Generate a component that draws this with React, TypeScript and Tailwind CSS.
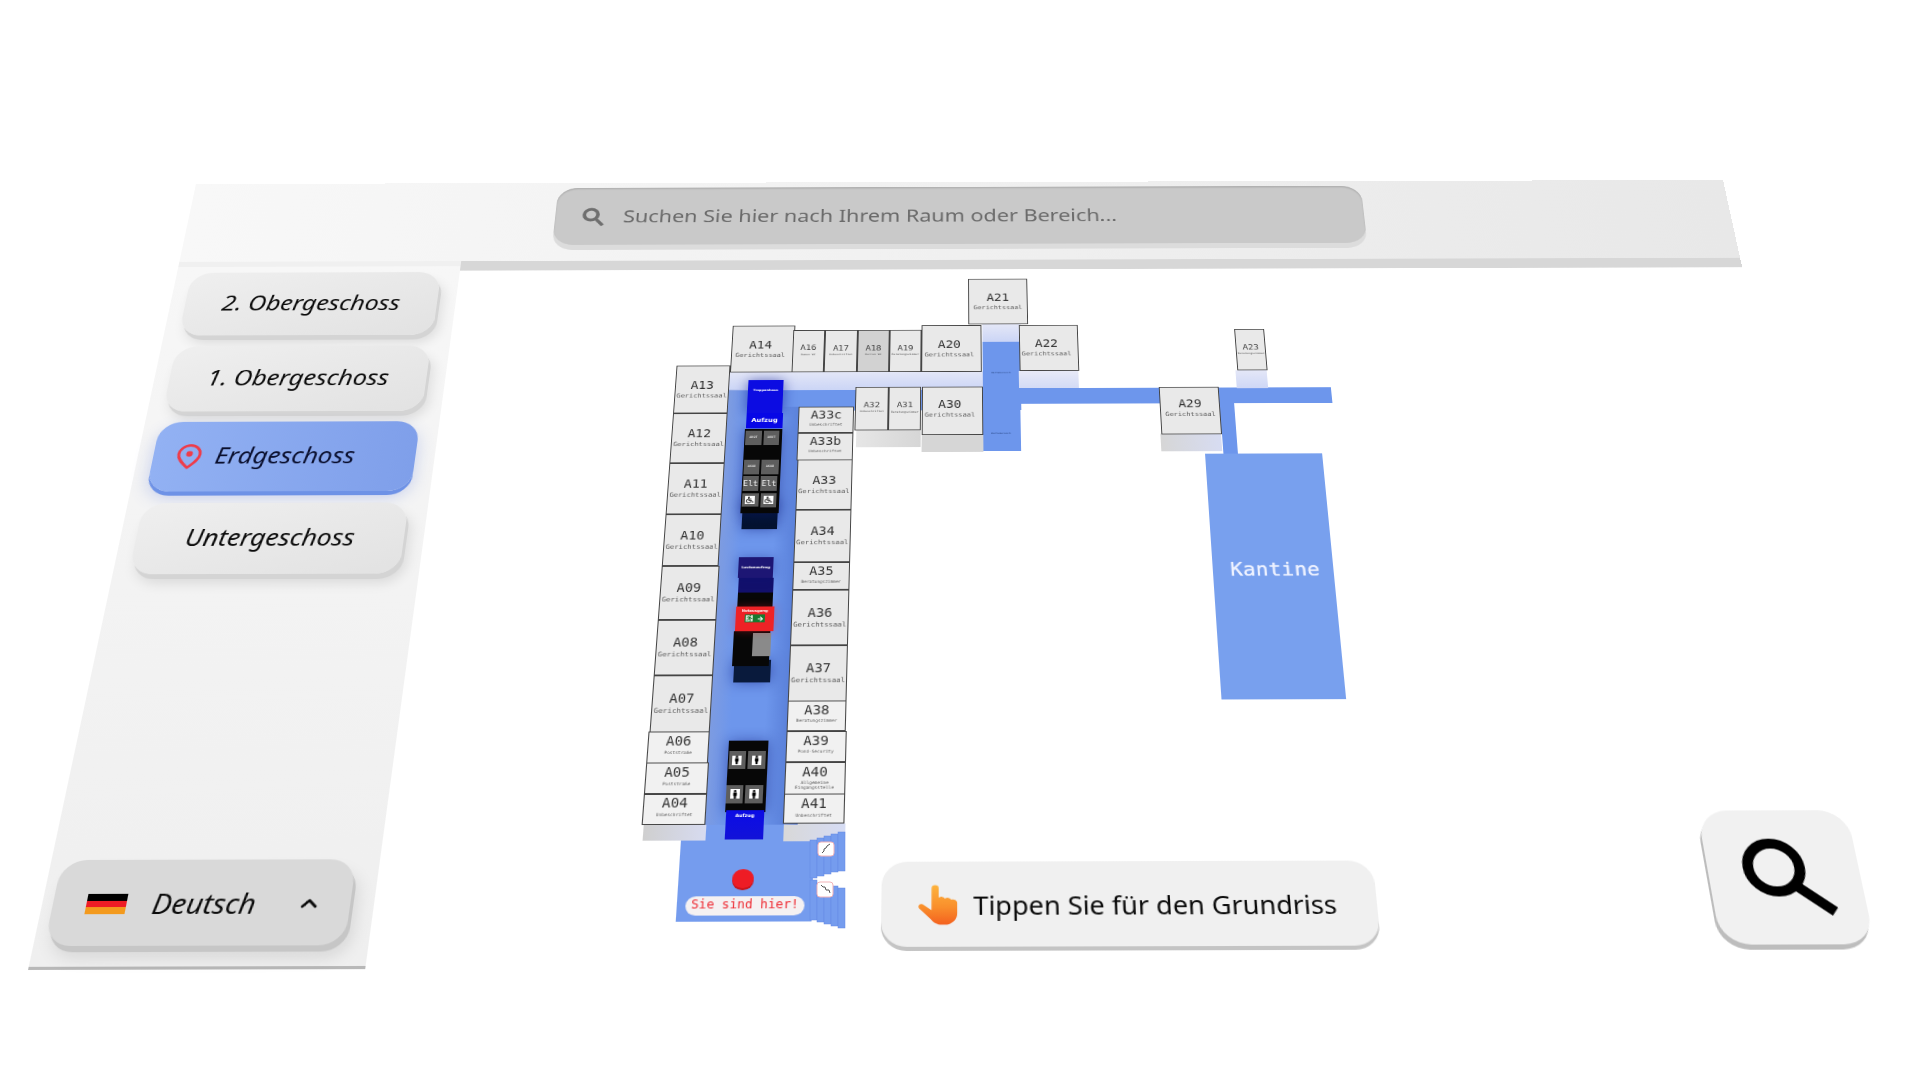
import type { ReactNode } from "react";
import { ChevronUp } from "lucide-react";
import { FaMale, FaRunning, FaWheelchair, FaArrowRight } from "react-icons/fa";

// the whole scene is one tilted plane; corners of the plane as they land on screen
const W = 1700;
const H = 920;
const [x0, y0, x1, y1, x2, y2, x3, y3] = [196, 184, 1723, 180, 1895, 965, 28, 970];

const den = (x1 - x2) * (y3 - y2) - (x3 - x2) * (y1 - y2);
const sx = x0 - x1 + x2 - x3;
const sy = y0 - y1 + y2 - y3;
const g = (sx * (y3 - y2) - (x3 - x2) * sy) / den;
const h = ((x1 - x2) * sy - sx * (y1 - y2)) / den;
const a = x1 - x0 + g * x1;
const b = x3 - x0 + h * x3;
const d = y1 - y0 + g * y1;
const e = y3 - y0 + h * y3;

const planeMatrix = `matrix3d(${a / W},${d / W},0,${g / W},${b / H},${e / H},0,${h / H},0,0,1,0,${x0},${y0},0,1)`;

// screen point -> plane point
function toPlane(x: number, y: number) {
  const m11 = a - g * x;
  const m12 = b - h * x;
  const m21 = d - g * y;
  const m22 = e - h * y;
  const det = m11 * m22 - m12 * m21;
  const u = ((x - x0) * m22 - m12 * (y - y0)) / det;
  const v = (m11 * (y - y0) - (x - x0) * m21) / det;
  return { x: u * W, y: v * H };
}

type BoxProps = {
  r: [number, number, number, number];
  className?: string;
  children?: ReactNode;
};

// r = top-left x, top y, bottom-right x, bottom y, measured on screen
function Box({ r, className, children }: BoxProps) {
  const p = toPlane(r[0], r[1]);
  const q = toPlane(r[2], r[3]);
  return (
    <div
      className={`absolute ${className ?? ""}`}
      style={{ left: p.x, top: p.y, width: q.x - p.x, height: q.y - p.y }}
    >
      {children}
    </div>
  );
}

type Room = {
  name: string;
  sub: string;
  r: [number, number, number, number];
  size: "l" | "m" | "s";
  bg?: string;
  nudge?: string;
};

const rooms: Room[] = [
  { name: "A21", sub: "Gerichtssaal", r: [968, 279, 1028, 324], size: "l" },
  { name: "A14", sub: "Gerichtssaal", r: [733, 326, 793, 372], size: "l", nudge: "pr-[5px]" },
  { name: "A16", sub: "Damen WC", r: [793, 330, 824, 372], size: "s", nudge: "pb-[2px]" },
  { name: "A17", sub: "Unbeschriftet", r: [825, 330, 857, 372], size: "s", nudge: "pb-[2px]" },
  { name: "A18", sub: "Herren WC", r: [858, 330, 889, 372], size: "s", bg: "bg-[#d2d2d2]", nudge: "pb-[2px]" },
  { name: "A19", sub: "Beratungszimmer", r: [890, 330, 921, 372], size: "s", nudge: "pb-[2px]" },
  { name: "A20", sub: "Gerichtssaal", r: [922, 325, 982, 372], size: "l", nudge: "pr-[5px]" },
  { name: "A22", sub: "Gerichtssaal", r: [1019, 325, 1079, 371], size: "l", nudge: "pr-[5px]" },
  { name: "A23", sub: "Beratungszimmer", r: [1234, 329, 1268, 370], size: "s" },
  { name: "A29", sub: "Gerichtssaal", r: [1159, 387, 1222, 434], size: "l", nudge: "pb-[6px]" },
  { name: "A30", sub: "Gerichtssaal", r: [922, 387, 983, 435], size: "l", nudge: "pr-[5px] pb-[6px]" },
  { name: "A31", sub: "Beratungszimmer", r: [889, 387, 921, 430], size: "s", nudge: "pb-[3px]" },
  { name: "A32", sub: "Unbeschriftet", r: [856, 387, 888, 430], size: "s", nudge: "pb-[3px]" },
  { name: "A33c", sub: "Unbeschriftet", r: [799, 407, 853.4, 433], size: "m", nudge: "pb-[5px]" },
  { name: "A33b", sub: "Unbeschriftet", r: [798, 433, 852.8, 460], size: "m", nudge: "pb-[5px]" },
  { name: "A33", sub: "Gerichtssaal", r: [797, 460, 851.6, 510], size: "l" },
  { name: "A34", sub: "Gerichtssaal", r: [795, 510, 850.3, 562], size: "l" },
  { name: "A35", sub: "Beratungszimmer", r: [793, 562, 849.6, 590], size: "m", nudge: "pb-[3px]" },
  { name: "A36", sub: "Gerichtssaal", r: [792, 590, 848.3, 645], size: "l" },
  { name: "A37", sub: "Gerichtssaal", r: [790, 645, 847, 701], size: "l" },
  { name: "A38", sub: "Beratungszimmer", r: [787.5, 701, 846.2, 731], size: "m", bg: "bg-[#f1f1f1]", nudge: "pb-[5px]" },
  { name: "A39", sub: "Pond-Security", r: [786.4, 731, 845.5, 762], size: "m", bg: "bg-[#f1f1f1]", nudge: "pb-[5px]" },
  { name: "A40", sub: "Allgemeine Eingangsstelle", r: [785, 762, 844.7, 794], size: "m", bg: "bg-[#f1f1f1]" },
  { name: "A41", sub: "Unbeschriftet", r: [784, 794, 844, 824], size: "m", bg: "bg-[#f1f1f1]", nudge: "pb-[3px]" },
  { name: "A13", sub: "Gerichtssaal", r: [677, 366, 727.5, 413], size: "l" },
  { name: "A12", sub: "Gerichtssaal", r: [673.4, 413, 725, 463], size: "l" },
  { name: "A11", sub: "Gerichtssaal", r: [669.6, 463, 722, 514], size: "l" },
  { name: "A10", sub: "Gerichtssaal", r: [665.7, 514, 719, 566], size: "l" },
  { name: "A09", sub: "Gerichtssaal", r: [661.7, 566, 716, 620], size: "l" },
  { name: "A08", sub: "Gerichtssaal", r: [657.6, 620, 713, 675], size: "l" },
  { name: "A07", sub: "Gerichtssaal", r: [653.4, 675, 710, 732], size: "l" },
  { name: "A06", sub: "Poststraße", r: [649, 732, 708, 763], size: "m", bg: "bg-[#f1f1f1]", nudge: "pb-[5px]" },
  { name: "A05", sub: "Poststraße", r: [646.7, 763, 707, 794], size: "m", bg: "bg-[#f1f1f1]", nudge: "pb-[5px]" },
  { name: "A04", sub: "Unbeschriftet", r: [644.3, 794, 705, 825], size: "m", bg: "bg-[#f1f1f1]", nudge: "pb-[5px]" },
];

// soft faces under the raised rooms
const walls: BoxProps[] = [
  { r: [730, 372, 983, 390], className: "bg-linear-to-b from-[#e4e7f7] to-[#cbd5f6]" },
  { r: [982, 324, 1021, 342], className: "bg-linear-to-b from-[#e4e7f7] to-[#cbd5f6]" },
  { r: [1019, 371, 1079, 388], className: "bg-linear-to-b from-[#e8eaf7] to-[#d3dbf6]" },
  { r: [1235, 370, 1268, 388], className: "bg-linear-to-b from-[#e4e7f7] to-[#ced7f6]" },
  { r: [1160, 434, 1222, 451], className: "bg-linear-to-r from-[#d6d6d6] to-[#d7dcf2]" },
  { r: [856, 430, 921, 447], className: "bg-linear-to-r from-[#e6e6e6] to-[#d6d6d6]" },
  { r: [922, 435, 983, 452], className: "bg-[#d6d6d6]" },
  { r: [644, 825, 705, 841], className: "bg-linear-to-r from-[#cfcfcf] to-[#d7dbf0]" },
  { r: [784, 824, 845, 841], className: "bg-linear-to-r from-[#d8d8d8] to-[#d6dcf4]" },
  { r: [714, 390, 726, 825], className: "bg-linear-to-r from-[#8aa0d8] to-transparent" },
  { r: [780, 407, 798, 825], className: "bg-linear-to-r from-transparent to-[#4f74cf]" },
];

const floors: BoxProps[] = [
  { r: [708, 372, 800, 840], className: "bg-[#6d96ec]" },
  { r: [730, 372, 1021, 410], className: "bg-[#6d96ec]" },
  { r: [982, 325, 1021, 451], className: "bg-[#6d96ec]" },
  { r: [1019, 388, 1332, 403], className: "bg-[#6d96ec]" },
  { r: [1220, 400, 1238, 456], className: "bg-[#6d96ec]" },
  { r: [682, 825, 812, 921], className: "bg-[#759cee]" },
];

type Tile = { r: [number, number, number, number]; label?: string; kind: "tiny" | "elt" | "chair" | "wc" };

const tiles: Tile[] = [
  { r: [746, 431, 761, 445], label: "AKOT", kind: "tiny" },
  { r: [764, 431, 779, 445], label: "AKOT", kind: "tiny" },
  { r: [744, 460, 759, 474], label: "AKOB", kind: "tiny" },
  { r: [762, 460, 778, 474], label: "AKOB", kind: "tiny" },
  { r: [743, 476, 758, 491], label: "Elt", kind: "elt" },
  { r: [761, 476, 777, 491], label: "Elt", kind: "elt" },
  { r: [742, 493, 758, 507], kind: "chair" },
  { r: [761, 493, 776, 507], kind: "chair" },
  { r: [729, 751, 745, 769], kind: "wc" },
  { r: [748, 751, 765, 769], kind: "wc" },
  { r: [727, 785, 743, 803], kind: "wc" },
  { r: [746, 785, 763, 803], kind: "wc" },
];

function RoomBox({ room }: { room: Room }) {
  return (
    <Box
      r={room.r}
      className={`flex flex-col items-center justify-center border-[1.25px] border-[#444] font-['DejaVu_Sans_Mono',monospace] leading-none ${room.bg ?? "bg-[#e9e9e9]"} ${room.nudge ?? ""}`}
    >
      {room.size === "l" && (
        <>
          <span className="text-[13.5px] text-[#333]">{room.name}</span>
          <span className="mt-[2.5px] text-[7.3px] text-[#5c5c5c]">{room.sub}</span>
        </>
      )}
      {room.size === "m" && (
        <>
          <span className="text-[13.5px] text-[#333]">{room.name}</span>
          <span className="mt-[2px] w-[56px] text-center text-[4.4px] leading-[5px] text-[#5c5c5c]">{room.sub}</span>
        </>
      )}
      {room.size === "s" && (
        <>
          <span className="text-[9.5px] text-[#444]">{room.name}</span>
          <span className="mt-[3px] text-[3.2px] whitespace-nowrap text-[#555]">{room.sub}</span>
        </>
      )}
    </Box>
  );
}

function TileBox({ tile }: { tile: Tile }) {
  return (
    <Box
      r={tile.r}
      className="flex items-center justify-center bg-[#5e5e5e] font-['DejaVu_Sans_Mono',monospace] leading-none text-white"
    >
      {tile.kind === "tiny" && <span className="text-[3.5px] font-bold text-[#ddd]">{tile.label}</span>}
      {tile.kind === "elt" && <span className="text-[8.5px] text-[#f2f2f2]">{tile.label}</span>}
      {tile.kind === "chair" && (
        <span className="flex h-[10px] w-[10px] items-center justify-center bg-white">
          <FaWheelchair className="h-[8px] w-[8px] text-[#333]" />
        </span>
      )}
      {tile.kind === "wc" && (
        <span className="flex h-[10px] w-[9px] items-center justify-center bg-white">
          <FaMale className="h-[9px] w-[7px] text-black" />
        </span>
      )}
    </Box>
  );
}

function MapCanvas() {
  return (
    <div className="pointer-events-none absolute inset-0 blur-[0.35px]">
      {floors.map((f, i) => (
        <Box key={i} {...f} />
      ))}
      {walls.map((f, i) => (
        <Box key={i} {...f} />
      ))}

      <Box r={[1205, 454, 1346, 699]} className="flex items-start justify-center bg-[#78a0ee] pl-[4px]">
        <span className="mt-[129px] font-['DejaVu_Sans_Mono',monospace] text-[21px] leading-none font-medium tracking-[0.2px] text-[#eef2ff] [text-shadow:0_0_1px_#eef2ff]">
          Kantine
        </span>
      </Box>

      {/* stairwell block */}
      <Box
        r={[749, 380, 782, 413]}
        className="flex items-start justify-center bg-[#0c0ce2] shadow-[0_0_14px_rgba(10,20,140,0.55)]"
      >
        <span className="mt-[11px] font-['DejaVu_Sans',sans-serif] text-[3.6px] font-bold text-white">Treppenhaus</span>
      </Box>
      <Box r={[743, 500, 777, 529]} className="bg-linear-to-b from-[#06183c] to-[#03112e] shadow-[0_0_14px_rgba(10,20,120,0.5)]" />
      <Box r={[745, 429, 779, 513]} className="bg-[#070707] shadow-[0_0_14px_rgba(10,20,120,0.45)]" />
      <Box r={[747, 413, 782, 428]} className="flex items-center justify-center bg-[#0707e6]">
        <span className="font-['DejaVu_Sans',sans-serif] text-[7px] font-bold text-white">Aufzug</span>
      </Box>

      {/* Lastenaufzug + Notausgang */}
      <Box r={[739, 578, 773, 594]} className="bg-[#12106c]" />
      <Box
        r={[739, 557, 773, 578]}
        className="flex items-center justify-center bg-[#1d1674] shadow-[0_0_12px_rgba(10,20,120,0.35)]"
      >
        <span className="font-['DejaVu_Sans',sans-serif] text-[3.8px] font-bold whitespace-nowrap text-white">Lastenaufzug</span>
      </Box>
      <Box r={[734, 660, 770, 682]} className="bg-[#091a3c] shadow-[0_0_14px_rgba(10,20,120,0.5)]" />
      <Box r={[738, 593, 772, 608]} className="bg-[#070707]" />
      <Box r={[734, 631, 769, 666]} className="bg-[#070707]" />
      <Box r={[753, 633, 770, 656]} className="bg-[#8a8a8a]" />
      <Box r={[736, 607, 773, 631]} className="flex flex-col items-center bg-[#ee2226] shadow-[0_0_10px_rgba(230,30,40,0.35)]">
        <span className="mt-[2px] font-['DejaVu_Sans',sans-serif] text-[3.8px] leading-[5px] font-bold text-white">Notausgang</span>
        <span className="mt-[2px] flex h-[9px] w-[20px] items-center justify-between bg-[#177a2f] px-[1px]">
          <FaRunning className="h-[7px] w-[7px] bg-[#d8e8d8] text-[#177a2f]" />
          <FaArrowRight className="h-[6px] w-[7px] text-white" />
        </span>
      </Box>

      {/* lower lift block */}
      <Box r={[729, 741, 765, 812]} className="bg-[#070707] shadow-[0_0_14px_rgba(10,20,120,0.45)]" />
      <Box r={[726, 810, 763, 839]} className="flex items-start justify-center bg-linear-to-b from-[#0b0be6] to-[#1212d8]">
        <span className="mt-[3px] font-['DejaVu_Sans',sans-serif] text-[4.6px] font-bold text-white">Aufzug</span>
      </Box>

      {tiles.map((t, i) => (
        <TileBox key={i} tile={t} />
      ))}

      {rooms.map((room) => (
        <RoomBox key={room.name} room={room} />
      ))}

      <Box r={[984, 370, 1018, 375]} className="flex items-center justify-center font-['DejaVu_Sans_Mono',monospace] text-[2.8px] text-[#24407c]">
        Wartebereich
      </Box>
      <Box r={[984, 431, 1018, 436]} className="flex items-center justify-center font-['DejaVu_Sans_Mono',monospace] text-[2.8px] text-[#24407c]">
        Wartebereich
      </Box>

      <Box r={[733, 869, 753, 888]} className="rounded-full bg-[#ee1c25] shadow-[0_2px_0_#c8141c]" />
      <Box
        r={[686, 896, 804, 915]}
        className="flex items-center justify-center rounded-full bg-[#f5f1f2] font-['DejaVu_Sans_Mono',monospace] text-[11.8px] leading-none whitespace-nowrap text-[#ee2b33]"
      >
        Sie sind hier!
      </Box>
    </div>
  );
}

function Stairs() {
  const up = [
    [810, 840, 878],
    [817, 838, 876],
    [824, 836, 874],
    [831, 834, 872],
    [838, 832, 871],
  ];
  const down = [
    [810, 880, 920],
    [817, 883, 922],
    [824, 885, 924],
    [831, 886, 926],
    [838, 888, 928],
  ];
  return (
    <svg className="pointer-events-none absolute inset-0" width={1920} height={1080} viewBox="0 0 1920 1080" fill="none">
      {up.map(([x, t, bt]) => (
        <rect key={x} x={x} y={t} width={7} height={bt - t} fill="#759cee" stroke="#6389e4" strokeWidth={0.5} />
      ))}
      {down.map(([x, t, bt]) => (
        <rect key={x} x={x} y={t} width={7} height={bt - t} fill="#759cee" stroke="#6389e4" strokeWidth={0.5} />
      ))}
      <rect x={818} y={842} width={16} height={14} rx={3} fill="#fff" stroke="#f2b3b8" strokeWidth={1} />
      <path d="M822 853l2-2v-2l2-1 1-2 3-2" stroke="#555" strokeWidth={1} />
      <rect x={817} y={882} width={16} height={15} rx={3} fill="#fff" stroke="#f2b3b8" strokeWidth={1} />
      <path d="M821 885l2 2h2l1 3h3l1 3" stroke="#555" strokeWidth={1} />
    </svg>
  );
}

function Hand() {
  return (
    <svg width="38" height="42" viewBox="0 0 40 43">
      <defs>
        <linearGradient id="hand" x1="0" y1="0" x2="0" y2="1">
          <stop offset="0" stopColor="#fdb33d" />
          <stop offset="0.55" stopColor="#f98f2c" />
          <stop offset="1" stopColor="#f4611f" />
        </linearGradient>
      </defs>
      <path
        d="M13 3.5a3.5 3.5 0 0 1 7 0V13c2-1.5 5-1 6 1 2-1.5 5-.8 6 1.2 2.5-1 6 .5 6 3.5V29c0 7-5 12-12 12h-3c-5 0-8-2-11-6L1 24c-2-2.5 1-5.5 3.5-4L13 26Z"
        fill="url(#hand)"
      />
    </svg>
  );
}

function FloorButton({ label, active }: { label: string; active?: boolean }) {
  if (active) {
    return (
      <div className="flex h-[86px] items-center gap-[13px] rounded-[24px] bg-linear-to-r from-[#92b1f3] to-[#7f9fea] pl-[23px] text-[26.5px] text-[#0a0f2e] italic shadow-[0_5px_0_#6e92e6,0_8px_18px_rgba(90,120,220,0.3)]">
        <svg width="28" height="31" viewBox="0 0 28 31" fill="none">
          <path d="M14 29C9 24 3 19 3 12.5a11 11 0 0 1 22 0C25 19 19 24 14 29Z" stroke="#ee3c4a" strokeWidth="3" strokeLinejoin="round" />
          <circle cx="14" cy="12" r="3.4" fill="#ee3c4a" />
        </svg>
        {label}
      </div>
    );
  }
  return (
    <div className="flex h-[84px] items-center justify-center rounded-[24px] bg-linear-to-br from-[#efefef] to-[#e2e2e2] text-[26.5px] text-[#0b0b0b] italic shadow-[3px_6px_0_#d4d4d4,6px_11px_14px_rgba(0,0,0,0.1)]">
      {label}
    </div>
  );
}

export default function App() {
  return (
    <div className="relative h-[1080px] w-[1920px] overflow-hidden bg-white font-['Noto_Sans',sans-serif]">
      <div className="relative flex h-[920px] w-[1700px] origin-top-left flex-col" style={{ transform: planeMatrix }}>
        {/* top bar */}
        <div className="flex h-[109px] shrink-0 justify-center bg-linear-to-r from-[#f8f8f8] via-[#f0f0f0] to-[#e8e8e8] pt-[7px]">
          <div className="flex h-[80px] w-[892px] items-center gap-[20px] rounded-[22px] bg-[#c9c9c9] pt-[1px] pl-[29px] text-[23.8px] text-[#6a6a6a] shadow-[inset_0_2px_2px_#b0b0b0,0_7px_0_#dcdcdc]">
            <svg width="26" height="28" viewBox="0 0 26 28" fill="none" stroke="#6f6f6f" strokeWidth="4">
              <circle cx="10.5" cy="11" r="7.5" />
              <path d="M16 17l8 9" />
            </svg>
            Suchen Sie hier nach Ihrem Raum oder Bereich...
          </div>
        </div>
        <div className="flex h-[7px] shrink-0 items-start">
          <div className="h-full w-[307px] bg-[#f0f0f0]" />
          <div className="h-[13px] flex-1 bg-[#d7d7d7]" />
        </div>

        <div className="flex min-h-0 flex-1">
          {/* floors */}
          <div className="flex w-[307px] shrink-0 flex-col border-b-[3px] border-[#b8b8b8] bg-linear-to-b from-[#f7f7f7] to-[#efefef] pt-[8px] pr-[20px] pb-[20px] pl-[16px]">
            <div className="flex flex-col gap-[13.5px]">
              <FloorButton label="2. Obergeschoss" />
              <FloorButton label="1. Obergeschoss" />
              <FloorButton label="Erdgeschoss" active />
              <FloorButton label="Untergeschoss" />
            </div>
            <div className="mt-auto -ml-[6px] flex h-[85px] w-[275px] items-center rounded-[24px] bg-[#d9d9d9] pt-[3px] pl-[31px] text-[27px] text-[#0b0b0b] italic shadow-[3px_6px_0_#c6c6c6,6px_12px_16px_rgba(0,0,0,0.1)]">
              <div className="flex h-[20px] w-[37px] flex-col">
                <div className="flex-1 bg-black" />
                <div className="flex-1 bg-[#ee1c25]" />
                <div className="flex-1 bg-[#f39a1e]" />
              </div>
              <span className="ml-[24px]">Deutsch</span>
              <ChevronUp className="mr-[26px] ml-auto h-[24px] w-[24px]" strokeWidth={2.5} />
            </div>
          </div>

          {/* bottom row of the map area */}
          <div className="flex flex-1 items-end justify-between pr-[14px] pb-[20px] pl-[469px]">
            <div className="flex h-[84px] w-[458px] items-center gap-[13px] rounded-[24px] bg-[#f0f0f0] pt-[3px] pl-[34px] text-[25px] text-[#0b0b0b] shadow-[0_4px_0_#c4c4c4]">
              <Hand />
              Tippen Sie für den Grundriss
            </div>
            <div className="flex h-[134px] w-[141px] items-center justify-center rounded-[28px] bg-[#f1f1f1] pt-[2px] pl-[6px] shadow-[-2px_5px_0_#bdbdbd]">
              <svg width="84" height="78" viewBox="0 0 84 78" fill="none" stroke="#000" strokeWidth="10">
                <circle cx="30" cy="29" r="24" />
                <path d="M47 47l32 26" />
              </svg>
            </div>
          </div>
        </div>

        <MapCanvas />
      </div>
      <Stairs />
    </div>
  );
}
